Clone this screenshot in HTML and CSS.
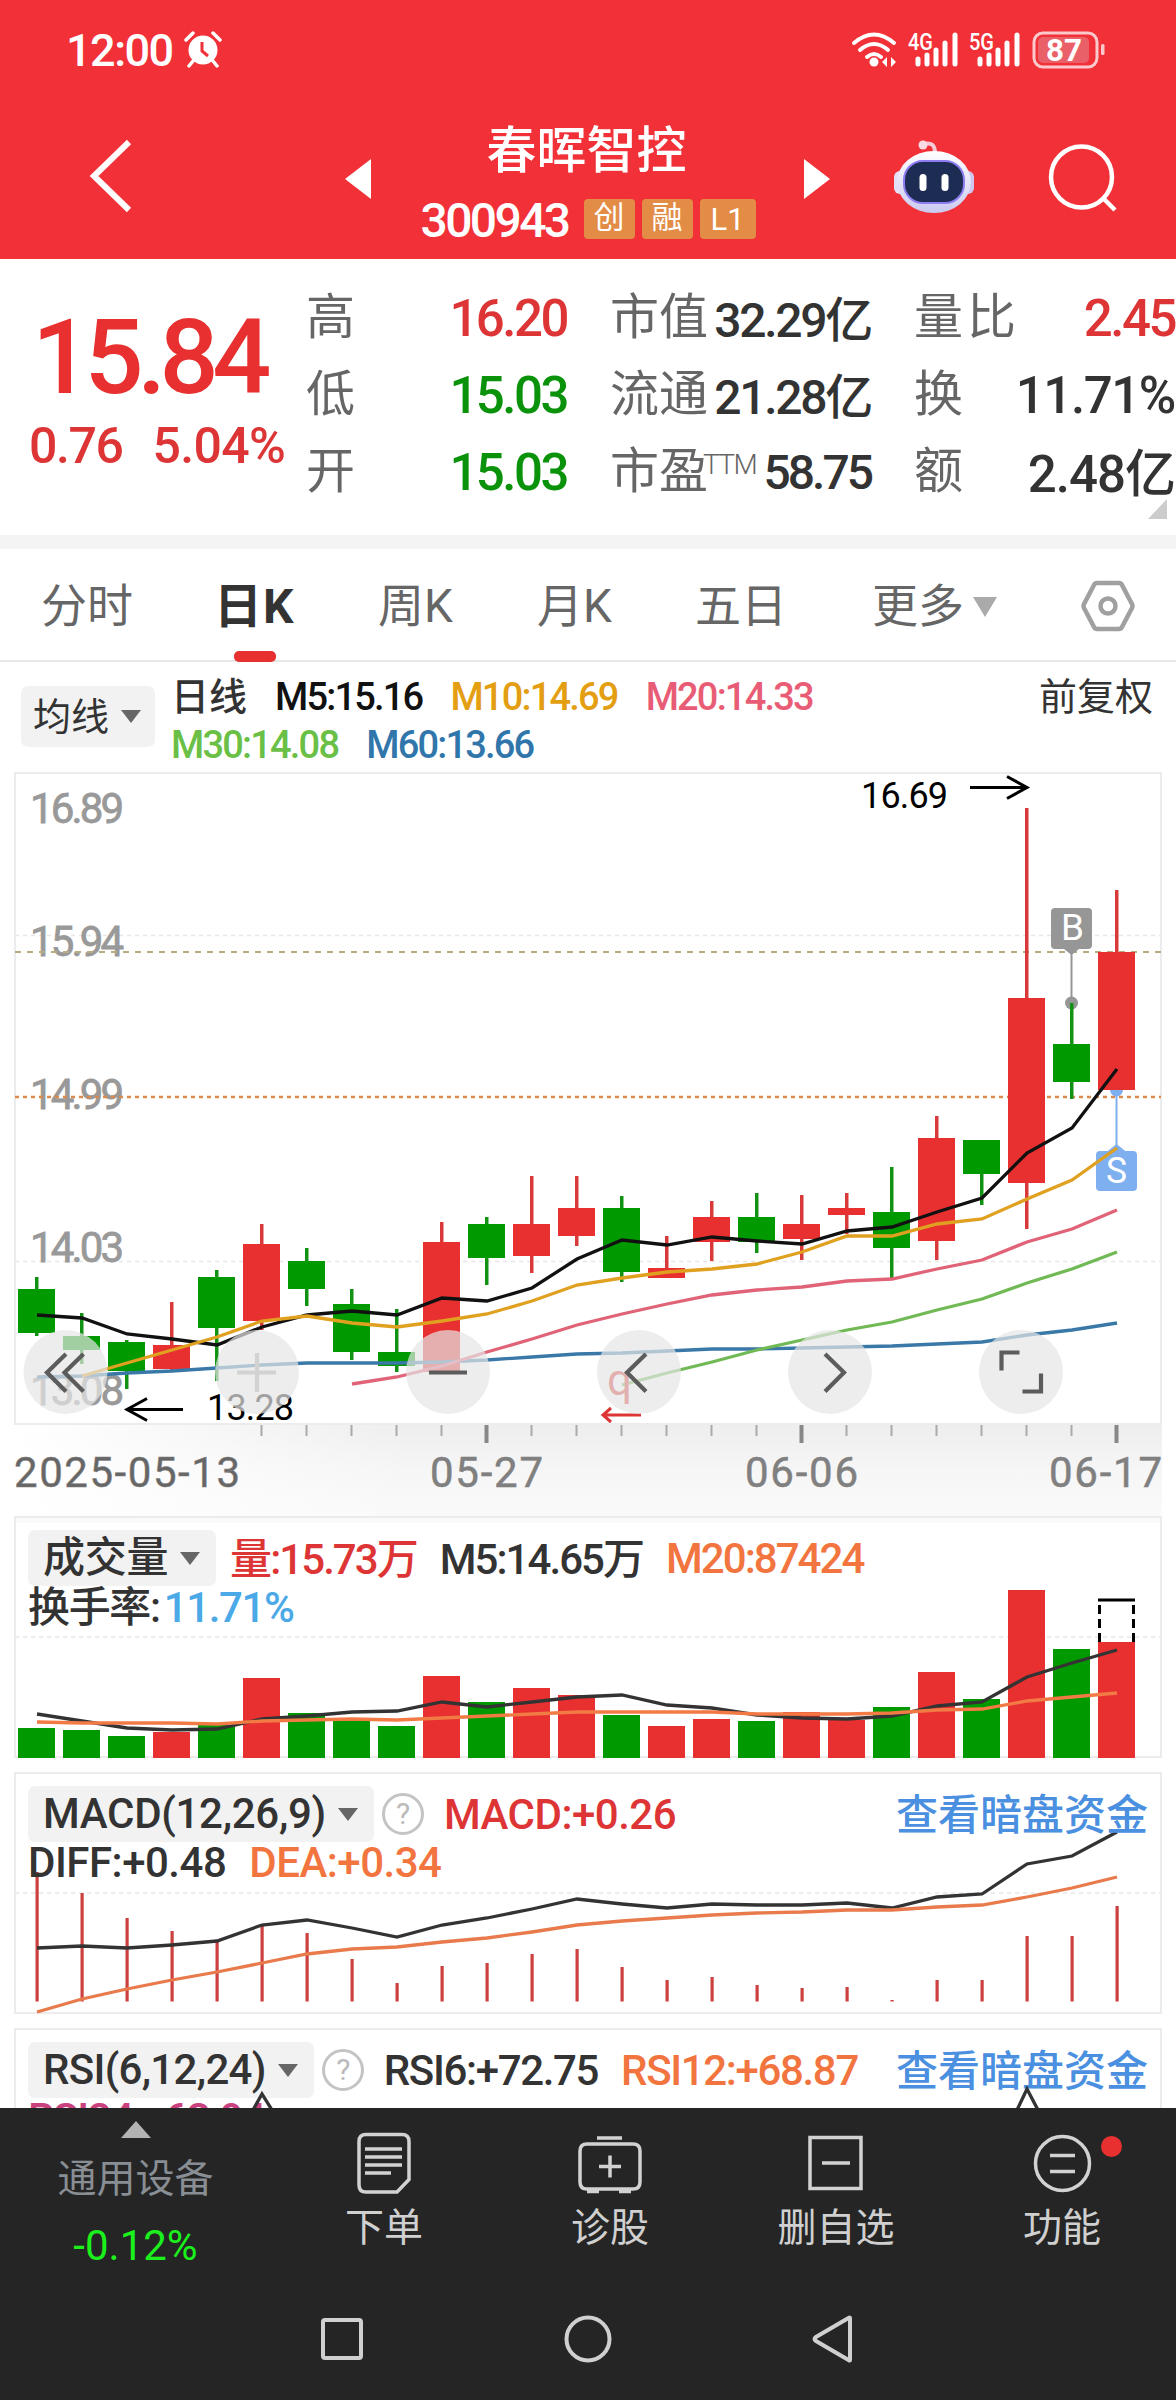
FILE: index.html
```
<!DOCTYPE html>
<html lang="zh-CN">
<head>
    <meta charset="UTF-8">
    <title>春晖智控 300943</title>
    <link rel="stylesheet" href="styles.css">
</head>
<body>
<div id="app">
    <div class="header">
        <div class="status">
            <span class="time">12:00</span>
            <svg class="alarm" width="38" height="38" viewBox="0 0 38 38">
                <circle cx="19" cy="20" r="14.5" fill="#fff"/>
                <path d="M2 10L9 3M36 10L29 3M9 31l-4 5M29 31l4 5" stroke="#fff" stroke-width="3.5" stroke-linecap="round"/>
                <path d="M18 12v9l6 5" stroke="#f23038" stroke-width="3" fill="none"/>
            </svg>
            <svg class="signal" width="260" height="60" viewBox="850 20 260 60">
                <g fill="none" stroke="#fff" stroke-width="4" stroke-linecap="round">
                    <path d="M854 43q20-17 40 0M860 50q14-12 28 0M867 57q7-6 14 0"/>
                </g>
                <circle cx="874" cy="62" r="4.5" fill="#fff"/>
                <path d="M882 62l5-5v10zM896 62l-5-5v10z" fill="#fff"/>
                <g stroke="#fff" stroke-width="5" stroke-linecap="round">
                    <path d="M918 59v5M927 55v9M936 50v14M945 43v21M955 35v29"/>
                    <path d="M980 59v5M989 55v9M998 50v14M1007 43v21M1017 35v29"/>
                </g>
                <g fill="#fff" font-size="24" font-weight="500">
                    <text x="908" y="50" textLength="25" lengthAdjust="spacingAndGlyphs">4G</text>
                    <text x="969" y="50" textLength="25" lengthAdjust="spacingAndGlyphs">5G</text>
                </g>
                <rect x="1034" y="33" width="63" height="34" rx="9" fill="#f23038" stroke="#fbc9cb" stroke-width="3"/>
                <rect x="1038" y="37" width="51" height="26" rx="5" fill="#ea6068"/>
                <rect x="1101" y="44" width="3.5" height="11" rx="1.5" fill="#fbc9cb"/>
                <text x="1046" y="61" fill="#fff" font-size="32" font-weight="700" textLength="36" lengthAdjust="spacingAndGlyphs">87</text>
            </svg>
        </div>
        <div class="nav">
            <svg class="back" width="50" height="80" viewBox="86 136 50 80"><path d="M129 142L94 176L129 210" fill="none" stroke="#fff" stroke-width="6"/></svg>
            <svg class="prev" width="26" height="40" viewBox="0 0 26 40"><path d="M26 0v40L0 20z" fill="#fff"/></svg>
            <div class="stock">
                <div class="name">春晖智控</div>
                <div class="code"><span class="num">300943</span><span class="tag">创</span><span class="tag">融</span><span class="tag tag-l">L1</span></div>
            </div>
            <svg class="next" width="26" height="40" viewBox="0 0 26 40"><path d="M0 0v40l26-20z" fill="#fff"/></svg>
            <svg class="robot" width="84" height="80" viewBox="892 136 84 80">
                <defs>
                    <linearGradient id="shell" x1="0" y1="0" x2="0" y2="1"><stop offset="0" stop-color="#fff"/><stop offset="1" stop-color="#cbcaf0"/></linearGradient>
                </defs>
                <path d="M924 143q11-3 11 9" fill="none" stroke="#f7c9d6" stroke-width="4"/>
                <circle cx="923" cy="144" r="4.5" fill="#f9dbe4"/>
                <rect x="894" y="170" width="12" height="23" rx="6" fill="#e3e0f8"/>
                <rect x="962" y="170" width="12" height="23" rx="6" fill="#cfc6f0"/>
                <ellipse cx="934" cy="181" rx="37" ry="31" fill="url(#shell)"/>
                <rect x="904" y="160" width="60" height="42" rx="19" fill="#1c2c52" stroke="#8d7df0" stroke-width="2"/>
                <rect x="919.500" y="173" width="7" height="17" rx="3.500" fill="#fff"/>
                <rect x="941.500" y="173" width="7" height="17" rx="3.500" fill="#fff"/>
            </svg>
            <svg class="search" width="72" height="72" viewBox="1047 143 72 72"><g fill="none" stroke="#fff" stroke-width="4.500"><circle cx="1081.500" cy="177" r="30.500"/><path d="M1103 198l12 12"/></g></svg>
        </div>
    </div>

    <div class="quote">
        <div class="price">
            <div class="now">15.84</div>
            <div class="change"><span>0.76</span><span>5.04%</span></div>
        </div>
        <div class="cells">
            <div class="cell"><label>高</label><b class="red">16.20</b></div>
            <div class="cell mid"><label>市值</label><b class="cn">32.29亿</b></div>
            <div class="cell"><label class="wide">量比</label><b class="red">2.45</b></div>
            <div class="cell"><label>低</label><b class="green">15.03</b></div>
            <div class="cell mid"><label>流通</label><b class="cn">21.28亿</b></div>
            <div class="cell"><label>换</label><b class="turn">11.71%</b></div>
            <div class="cell"><label>开</label><b class="green">15.03</b></div>
            <div class="cell mid"><label>市盈<sup>TTM</sup></label><b class="pe">58.75</b></div>
            <div class="cell"><label>额</label><b class="loose cn">2.48亿</b></div>
        </div>
        <i class="corner"></i>
    </div>

    <div class="tabs">
        <span>分时</span>
        <span class="selected">日K</span>
        <span>周K</span>
        <span>月K</span>
        <span>五日</span>
        <span class="more">更多<i></i></span>
        <svg width="54" height="52" viewBox="0 0 54 52"><g fill="none" stroke="#a0a0a0" stroke-width="4.500"><path d="M16 3h22q2 0 3 2l10 19q1 2 0 4L41 47q-1 2-3 2H16q-2 0-3-2L3 28q-1-2 0-4L13 5q1-2 3-2z"/><circle cx="27" cy="26" r="7.500"/></g></svg>
    </div>

    <div class="legend">
        <div class="btn">均线<i></i></div>
        <div class="ma">
            <div><span class="t">日线</span><span class="m5">M5:15.16</span><span class="m10">M10:14.69</span><span class="m20">M20:14.33</span></div>
            <div><span class="m30">M30:14.08</span><span class="m60">M60:13.66</span></div>
        </div>
        <div class="fq">前复权</div>
    </div>

    <svg class="kline" id="kline" width="1176" height="744" viewBox="0 772 1176 744">
        <defs>
            <linearGradient id="shade" x1="0" y1="0" x2="0" y2="1"><stop offset="0" stop-color="#eee"/><stop offset=".5" stop-color="#f6f6f6"/><stop offset="1" stop-color="#fafafa"/></linearGradient>
            <linearGradient id="fade" x1="0" y1="0" x2="1" y2="0"><stop offset="0" stop-color="#fff"/><stop offset="1" stop-color="#fff" stop-opacity="0"/></linearGradient>
        </defs>
        <rect x="14" y="1425" width="1148" height="91" fill="url(#shade)"/>
        <rect x="14" y="1425" width="400" height="91" fill="url(#fade)"/>
        <rect class="frame" x="15" y="773" width="1146" height="651"/>
        <path class="grid" d="M15 935.500H1161M15 1261.500H1161"/>
        <g class="ylabel">
            <text x="30" y="823" textLength="94">16.89</text>
            <text x="30" y="956" textLength="94">15.94</text>
            <text x="30" y="1109" textLength="94">14.99</text>
            <text x="30" y="1262" textLength="94">14.03</text>
            <text x="30" y="1405" textLength="94">13.08</text>
        </g>
        <path d="M15 952H1161" stroke="#b9ab82" stroke-width="2" stroke-dasharray="6 6"/>
        <path d="M15 1097H1161" stroke="#d98a4e" stroke-width="2.500" stroke-dasharray="4 4"/>
        <g class="sell">
            <circle cx="1116.500" cy="1090" r="6.500"/>
            <path d="M1115.500 1090h2v56h-2z"/>
            <path d="M1116.500 1144l10 8h-20z"/>
            <rect x="1096" y="1151" width="41" height="40" rx="4"/>
            <text x="1106" y="1183" textLength="21" lengthAdjust="spacingAndGlyphs">S</text>
        </g>
        <g class="buy">
            <circle cx="1071.500" cy="1003" r="6.500"/>
            <path d="M1070.500 950h2v54h-2z"/>
            <path d="M1071.500 955l10-8h-20z"/>
            <rect x="1051" y="908" width="41" height="41" rx="4"/>
            <text x="1061" y="940" textLength="23" lengthAdjust="spacingAndGlyphs">B</text>
        </g>
        <g id="candles"></g>
        <g class="note">
            <text x="861" y="808" textLength="87">16.69</text>
            <text x="207" y="1420" textLength="87">13.28</text>
            <path d="M970 787.500h55M1007 776.500l20 11-20 11M183 1409.500h-55M147 1398.500l-20 11 20 11"/>
        </g>
        <g class="rights">
            <text x="607" y="1395">q</text>
            <path d="M641 1415h-37M611 1408l-8 7 8 7"/>
        </g>
        <g class="round">
            <circle cx="65.500" cy="1372" r="42"/>
            <circle cx="257" cy="1372" r="42"/>
            <circle cx="448" cy="1372" r="42"/>
            <circle cx="639" cy="1372" r="42"/>
            <circle cx="830" cy="1372" r="42"/>
            <circle cx="1021" cy="1372" r="42"/>
        </g>
        <g class="round-icon">
            <path d="M66 1354l-19 18.500 19 19M83.500 1354l-19 18.500 19 19"/>
            <path d="M237 1372.500h39M257 1353v39" class="disabled"/>
            <path d="M429 1372.500h38"/>
            <path d="M646 1354l-19 18.500 19 19M825 1354l19 18.500-19 19"/>
            <path d="M1019.500 1352.500h-18v18M1022.500 1391.500h18.500v-18"/>
        </g>
        <g id="ticks"></g>
        <g class="dates">
            <text x="14" y="1487" textLength="226" fill="#666">2025-05-13</text>
            <text x="430" y="1487" textLength="113">05-27</text>
            <text x="745" y="1487" textLength="113">06-06</text>
            <text x="1049" y="1487" textLength="113">06-17</text>
        </g>
    </svg>

    <div class="panel">
        <svg id="volume" width="1176" height="256" viewBox="0 1516 1176 256">
            <rect x="14" y="1516" width="1148" height="7" fill="#fafafa"/>
            <rect class="frame" x="15" y="1517" width="1146" height="240"/>
            <path class="grid" d="M15 1637H1161"/>
        </svg>
        <div class="row tight"><div class="btn">成交量<i></i></div><span class="red cn">量:15.73万</span><span class="cn">M5:14.65万</span><span class="orange">M20:87424</span></div>
        <div class="row second"><span class="cn">换手率:<em>11.71%</em></span></div>
    </div>

    <div class="panel">
        <svg id="macd" width="1176" height="256" viewBox="0 1772 1176 256">
            <rect class="frame" x="15" y="1773" width="1146" height="240"/>
            <path class="grid" d="M15 1893H1161"/>
        </svg>
        <div class="row loose"><div class="btn">MACD(12,26,9)<i></i></div><u class="help">?</u><span class="red">MACD:+0.26</span><a class="cn">查看暗盘资金</a></div>
        <div class="row second loose"><span>DIFF:+0.48</span><span class="orange">DEA:+0.34</span></div>
    </div>

    <div class="panel last">
        <svg width="1176" height="80" viewBox="0 2028 1176 80">
            <rect class="frame" x="15" y="2029" width="1146" height="240"/>
        </svg>
        <div class="row"><div class="btn rsi">RSI(6,12,24)<i></i></div><u class="help">?</u><span>RSI6:+72.75</span><span class="orange">RSI12:+68.87</span><a class="cn">查看暗盘资金</a></div>
        <div class="row second"><span class="pink">RSI24:+63.94</span></div>
        <svg class="front" width="1176" height="80" viewBox="0 2028 1176 80">
            <path class="line" stroke="#333" d="M253 2110l9-16 10 16M1017 2110l10-21 11 21"/>
        </svg>
    </div>

    <div class="footer">
        <div class="index">
            <i></i>
            <div class="label">通用设备</div>
            <div class="rate">-0.12%</div>
        </div>
        <div class="item">
            <svg width="66" height="66" viewBox="351 2130 66 66"><path d="M366 2134.500h36q7 0 7 7v38l-12 12.500h-31q-7 0-7-7v-43.500q0-7 7-7zM365 2149h37M365 2157h37M365 2165h37M365 2173h26"/></svg>
            <div>下单</div>
        </div>
        <div class="item">
            <svg width="66" height="66" viewBox="577 2130 66 66"><path d="M587 2144h46q7 0 7 7v31q0 7-7 7h-46q-7 0-7-7v-31q0-7 7-7zM597 2138h25M599 2166.500h22M610 2155.500v22M587 2191.500h12M619 2191.500h12"/></svg>
            <div>诊股</div>
        </div>
        <div class="item">
            <svg width="66" height="66" viewBox="802 2130 66 66"><path d="M809 2137.500h51v51h-51zM821 2163h28"/></svg>
            <div>删自选</div>
        </div>
        <div class="item">
            <svg width="66" height="66" viewBox="1029 2130 66 66"><path d="M1050 2155.500h25M1050 2171.500h25"/><circle cx="1062.500" cy="2163.500" r="27"/></svg>
            <div>功能</div>
            <b class="dot"></b>
        </div>
    </div>
    <div class="sysbar">
        <svg width="48" height="52" viewBox="0 0 48 52"><rect x="5" y="7" width="38" height="38" rx="2"/></svg>
        <svg width="52" height="52" viewBox="0 0 52 52"><circle cx="26" cy="26" r="21.500"/></svg>
        <svg width="48" height="52" viewBox="0 0 48 52"><path d="M40 5v42q0 1-1.500 0L6 28q-3-2 0-4L38.500 5q1.500-1 1.500 0z"/></svg>
    </div>
</div>
<script src="chart.js"></script>
</body>
</html>
```
FILE: styles.css
```
*{
    margin: 0;
    padding: 0;
    box-sizing: border-box;
}
body{
    background: #fff;
    font-family: Roboto, "Noto Sans CJK SC", sans-serif;
    color: #333;
}
i, em, u, b{
    font-style: normal;
    font-weight: normal;
    text-decoration: none;
}
em{
    font-weight: inherit;
}
svg{
    display: block;
}
#app{
    width: 1176px;
    height: 2400px;
    overflow: hidden;
}
.red{
    color: #dd3535 !important;
}
.green{
    color: #0a930a !important;
}
.orange{
    color: #f2743f;
}
.pink{
    color: #c9417f;
}
/* mixed chinese text sits lower in its line box */
.cn{
    margin-top: -6px;
}

/* header */
.header{
    height: 259px;
    background: #f23038;
    color: #fff;
}
.status{
    height: 100px;
    display: flex;
    align-items: center;
    padding-left: 66px;
}
.status .time{
    font-size: 45px;
    font-weight: 500;
    letter-spacing: -1.5px;
    line-height: 60px;
    padding-top: 2px;
}
.status .alarm{
    margin-left: 11px;
    margin-top: -2px;
}
.status .signal{
    margin-left: auto;
    margin-right: 66px;
}
.nav{
    height: 158px;
    display: flex;
    align-items: center;
}
.nav .back{
    margin-left: 86px;
    margin-top: -6px;
}
.nav .prev{
    margin-left: 209px;
}
.nav .stock{
    width: 433px;
    height: 158px;
    text-align: center;
}
.nav .name{
    font-size: 50px;
    font-weight: 500;
    line-height: 70px;
    padding-top: 16px;
    padding-right: 2px;
}
.nav .code{
    display: flex;
    justify-content: center;
    align-items: center;
    height: 44px;
    margin-top: 11px;
    padding-left: 1px;
}
.nav .num{
    font-size: 48px;
    font-weight: 500;
    letter-spacing: -2.6px;
    margin-right: 15px;
    padding-top: 2px;
}
.nav .tag{
    width: 51px;
    height: 40px;
    line-height: 38px;
    font-size: 31px;
    background: #e38c46;
    border-radius: 4px;
    margin-right: 7px;
}
.nav .tag-l{
    width: 56px;
    margin-right: 0;
    line-height: 42px;
}
.nav .robot{
    margin-left: 62px;
    margin-top: -4px;
}
.nav .search{
    margin-left: 71px;
}

/* quote */
.quote{
    position: relative;
    display: flex;
    height: 276px;
    background: #fff;
    padding-top: 21px;
}
.price{
    width: 306px;
    color: #e83030;
}
.price .now{
    font-size: 104px;
    font-weight: 500;
    letter-spacing: -6.5px;
    line-height: 120px;
    padding-left: 32px;
    padding-top: 18px;
}
.price .change{
    display: flex;
    gap: 30px;
    padding-left: 29px;
    margin-top: -2px;
    font-size: 50px;
    line-height: 60px;
    letter-spacing: -1.4px;
    font-weight: 500;
    color: #dd3535;
}
.price .change span + span{
    letter-spacing: -.7px;
}
.cells{
    display: grid;
    grid-template-columns: 261px 261px 261px;
    column-gap: 43px;
    grid-auto-rows: 77px;
    width: 870px;
}
.cell{
    display: flex;
    justify-content: space-between;
    align-items: center;
    white-space: nowrap;
}
.cell label{
    font-size: 49px;
    color: #666;
    line-height: 74px;
    padding-bottom: 2px;
}
.cell label.wide{
    letter-spacing: 4px;
}
.cell sup{
    font-size: 28px;
    vertical-align: 14px;
    line-height: 1;
    letter-spacing: -1.6px;
    margin-left: -5px;
    font-weight: 300;
}
.cell b{
    font-size: 51px;
    font-weight: 500;
    letter-spacing: -2.5px;
    color: #333;
}
.cell.mid b{
    font-size: 48px;
    letter-spacing: -2.3px;
}
.cell.mid .pe{
    letter-spacing: -3px;
}
.cell b.loose{
    letter-spacing: -1px;
}
.cell b.turn{
    letter-spacing: -1.4px;
}
.quote .corner{
    position: absolute;
    right: 9px;
    bottom: 16px;
    border-left: 19px solid transparent;
    border-bottom: 20px solid #ccc;
}

/* period tabs */
.tabs{
    display: grid;
    grid-template-columns: 178px 159px 159px 158px 177px 209px 60px;
    align-items: center;
    height: 127px;
    border-top: 14px solid #f4f4f4;
    border-bottom: 2px solid #e8e8e8;
    padding-left: 41px;
    font-size: 46px;
    color: #666;
}
.tabs span{
    position: relative;
    line-height: 111px;
    padding-top: 2px;
}
.tabs .selected{
    color: #333;
    font-weight: 700;
    font-size: 48px;
    margin-left: -5px;
    letter-spacing: 1px;
}
.tabs .selected:after{
    content: '';
    position: absolute;
    left: 20px;
    bottom: 0;
    width: 42px;
    height: 11px;
    border-radius: 5px;
    background: #e83030;
}
.tabs .more{
    display: flex;
    align-items: center;
}
.tabs .more i{
    margin-left: 9px;
    border: 12px solid transparent;
    border-top: 20px solid #aaa;
    border-bottom: 0;
}

/* MA legend */
.legend{
    display: flex;
    height: 110px;
    padding-left: 21px;
    font-size: 38px;
}
.btn{
    display: flex;
    align-items: center;
    background: #f2f2f2;
    border-radius: 7px;
    font-weight: 400;
}
.btn i{
    margin-left: 12px;
    border: 10px solid transparent;
    border-top: 13px solid #666;
    border-bottom: 0;
}
.legend .btn{
    width: 134px;
    height: 61px;
    margin-top: 24px;
    padding-left: 12px;
    line-height: 54px;
}
.legend .ma{
    margin-left: 16px;
    padding-top: 11px;
    font-weight: 500;
    letter-spacing: -1.8px;
}
.legend .ma div{
    display: flex;
    gap: 28px;
    line-height: 48px;
}
.legend .t{
    letter-spacing: 0;
}
.legend .m5{ color: #111; }
.legend .m10{ color: #e39e12; }
.legend .m20{ color: #e85d75; }
.legend .m30{ color: #6abf46; }
.legend .m60{ color: #3176ab; }
.legend .fq{
    margin-left: auto;
    margin-right: 23px;
    padding-top: 11px;
    line-height: 48px;
}

/* charts */
.frame{
    fill: none;
    stroke: #ececec;
    stroke-width: 2;
}
.grid{
    stroke: #e6e6e6;
    stroke-width: 1.5;
    stroke-dasharray: 4 4;
}
.line{
    fill: none;
    stroke-width: 3.3;
}
.kline text{
    font-family: Roboto, sans-serif;
}
.ylabel text{
    font-size: 42px;
    fill: #999;
    stroke: #999;
    stroke-width: .8;
}
.dates text{
    font-size: 42px;
    stroke: #808080;
    stroke-width: .5;
}
.dates{
    fill: #808080;
}
.note text{
    font-size: 36px;
    fill: #000;
}
.note path{
    fill: none;
    stroke: #000;
    stroke-width: 3;
}
.rights text{
    font-size: 44px;
    fill: #dd3535;
}
.rights path{
    fill: none;
    stroke: #dd3535;
    stroke-width: 3;
}
.buy{ fill: #969696; }
.sell{ fill: #7eb0f0; }
.buy text, .sell text{
    font-size: 36px;
    fill: #fff;
}
.round{
    fill: #e5e5e5;
    fill-opacity: .7;
}
.round-icon path{
    fill: none;
    stroke: #5c5c5c;
    stroke-width: 4.2;
}
.round-icon .disabled{
    stroke: #d2d2d2;
}

/* indicator panels */
.panel{
    position: relative;
    height: 256px;
    overflow: hidden;
}
.panel svg{
    position: absolute;
    left: 0;
    top: 0;
}
.panel.last{
    height: 80px;
}
.panel .row{
    position: relative;
    display: flex;
    align-items: center;
    height: 56px;
    margin-top: 14px;
    padding-left: 28px;
    font-size: 42px;
    font-weight: 500;
    letter-spacing: -1.35px;
    white-space: nowrap;
}
.panel .second{
    height: 40px;
    margin-top: 0;
}
.panel .tight{
    letter-spacing: -1.95px;
}
.panel .loose{
    letter-spacing: -.5px;
}
.panel .row span{
    margin-right: 23px;
}
.panel .btn{
    height: 56px;
    line-height: 50px;
    padding: 0 16px 0 15px;
    margin-right: 14px;
    font-weight: 500;
    letter-spacing: -.3px;
}
.panel .rsi{
    letter-spacing: -.7px;
}
.panel .help{
    width: 42px;
    height: 42px;
    border: 3px solid #c4c4c4;
    border-radius: 50%;
    margin-left: -6px;
    margin-right: 20px;
    text-align: center;
    font-size: 30px;
    font-weight: 400;
    line-height: 36px;
    color: #bbb;
}
.panel em{
    color: #4aa9e6;
    margin-left: 4px;
}
.panel a{
    margin-left: auto;
    margin-right: 28px;
    letter-spacing: 0;
    color: #4a8fe0;
}

/* bottom bar */
.footer{
    position: relative;
    display: flex;
    height: 172px;
    background: #252525;
    color: #d0d0d0;
    font-size: 39px;
    text-align: center;
}
.index{
    width: 271px;
}
.index i{
    display: block;
    width: 30px;
    margin: 13px auto 0;
    border: 15px solid transparent;
    border-bottom: 17px solid #b3b3b3;
    border-top: 0;
}
.index .label{
    color: #888e93;
    line-height: 60px;
    margin-top: 11px;
}
.index .rate{
    color: #1cf01c;
    line-height: 60px;
    margin-top: 7px;
    font-size: 42px;
}
.item{
    position: relative;
    width: 226px;
    padding-top: 22px;
}
.item svg{
    margin: 0 auto 2px;
    fill: none;
    stroke: #d2d2d2;
    stroke-width: 3.5;
}
.item div{
    line-height: 60px;
}
.item .dot{
    position: absolute;
    left: 152px;
    top: 28px;
    width: 21px;
    height: 21px;
    border-radius: 50%;
    background: #e83030;
}
.sysbar{
    display: flex;
    height: 120px;
    padding: 33px 0 0 318px;
    background: #252525;
}
.sysbar svg{
    fill: none;
    stroke: #d0d0d0;
    stroke-width: 4;
}
.sysbar svg + svg{
    margin-left: 196px;
}
```
FILE: chart.js
```
// 25 trading days, one slot every 45px
var STEP = 45;
var RED = '#e83030', GREEN = '#009900';

// [high, top, bottom, low, up]
var candles = [
    [1277,1289,1333,1336,0],[1313,1336,1350,1364,0],[1340,1342,1371,1389,0],[1302,1345,1369,1370,1],
    [1270,1277,1328,1381,0],[1224,1244,1321,1330,1],[1248,1261,1289,1306,0],[1289,1304,1352,1360,0],
    [1309,1352,1366,1372,0],[1222,1242,1372,1372,1],[1217,1224,1258,1285,0],[1176,1224,1256,1273,1],
    [1176,1208,1236,1246,1],[1196,1208,1272,1282,0],[1236,1268,1278,1278,1],[1201,1217,1242,1261,1],
    [1193,1217,1242,1253,0],[1195,1224,1239,1260,1],[1193,1208,1215,1234,1],[1167,1212,1248,1278,0],
    [1116,1138,1241,1260,1],[1140,1140,1174,1205,0],[808,998,1183,1229,1],[1003,1044,1082,1099,0],
    [890,952,1090,1090,1]
];
var ma = [
    {color: '#3a78a8', from: 0, y: [1377,1376,1373,1371,1368,1365,1363,1363,1363,1362,1360,1357,1354,1353,1351,1349,1349,1348,1347,1346,1344,1342,1335,1330,1323]},
    {color: '#70b955', from: 13, y: [1385,1373,1362,1350,1340,1330,1322,1310,1299,1283,1269,1252]},
    {color: '#e06377', from: 7, y: [1384,1377,1366,1352,1339,1325,1314,1304,1295,1290,1287,1281,1279,1269,1260,1242,1229,1210]},
    {color: '#111', from: 0, y: [1315,1318,1334,1339,1345,1327,1315,1311,1315,1298,1301,1288,1259,1240,1245,1237,1241,1244,1231,1227,1212,1198,1153,1128,1069]},
    {color: '#e0a020', from: 1, y: [1376,1363,1350,1337,1321,1316,1323,1327,1321,1314,1301,1285,1278,1272,1269,1264,1252,1236,1236,1224,1219,1199,1180,1148]}
];
var vol = [1728,1730,1736,1732,1725,1678,1713,1721,1726,1676,1702,1688,1695,1715,1726,1719,1721,1712,1720,1707,1672,1699,1590,1649,1642];
var vol5 = [1714,1721,1728,1730,1729,1719,1716,1712,1711,1702,1707,1702,1697,1695,1705,1708,1715,1718,1719,1716,1706,1702,1677,1663,1650];
var vol20 = [1722,1723,1723,1723,1724,1721,1720,1719,1720,1718,1716,1714,1712,1712,1712,1712,1714,1714,1714,1713,1710,1709,1701,1697,1693];
var bars = [1872,1893,1918,1931,1941,1925,1933,1959,1983,1966,1963,1954,1949,1967,1980,1977,1985,1988,1987,2000,1980,1980,1936,1936,1906];
var diff = [1948,1946,1948,1945,1941,1925,1920,1928,1937,1925,1918,1909,1899,1904,1908,1904,1905,1905,1903,1908,1897,1894,1864,1856,1832];
var dea = [2012,1999,1989,1980,1972,1963,1954,1949,1947,1942,1938,1932,1925,1921,1918,1915,1913,1912,1910,1910,1907,1905,1897,1888,1877];

function rect(x, y, w, h, color) {
    return '<rect x="' + x + '" y="' + y + '" width="' + w + '" height="' + h + '" fill="' + color + '"/>';
}
function line(ys, from, color) {
    var pts = [];
    for (var i = 0; i < ys.length; i++) {
        pts.push((37 + STEP * (from + i)) + ',' + ys[i]);
    }
    return '<polyline class="line" stroke="' + color + '" points="' + pts.join(' ') + '"/>';
}

var k = '', v = '', m = '', t = '';
for (var i = 0; i < candles.length; i++) {
    var c = candles[i], color = c[4] ? RED : GREEN, x = 18 + STEP * i;
    k += rect(x + 17, c[0], 3.5, c[3] - c[0], c[4] ? '#d83a3a' : '#129212');
    k += rect(x, c[1], 37, c[2] - c[1], color);
    v += rect(x, vol[i], 37, 1758 - vol[i], color);
    m += rect(x + 17.5, bars[i], 3.2, 2001.5 - bars[i], '#cc4040');
    if (i >= 5) {
        t += (i - 3) % 7 == 0 ? rect(x + 16.5, 1425, 4, 18, '#888') : rect(x + 17.5, 1425, 2, 11, '#aaa');
    }
}
for (var j = 0; j < ma.length; j++) {
    k += line(ma[j].y, ma[j].from, ma[j].color);
}
v += line(vol5, 0, '#333') + line(vol20, 0, '#f27a45');
// projected volume for today
v += '<path d="M1098 1600h37" stroke="#000" stroke-width="3"/><path d="M1099.5 1605v37M1133.500 1605v37" stroke="#000" stroke-width="3" stroke-dasharray="9 5"/>';
m += line(diff, 0, '#333') + line(dea, 0, '#e87a4c');

document.getElementById('candles').innerHTML = k;
document.getElementById('ticks').innerHTML = t;
document.getElementById('volume').innerHTML += v;
document.getElementById('macd').innerHTML += m;
```
